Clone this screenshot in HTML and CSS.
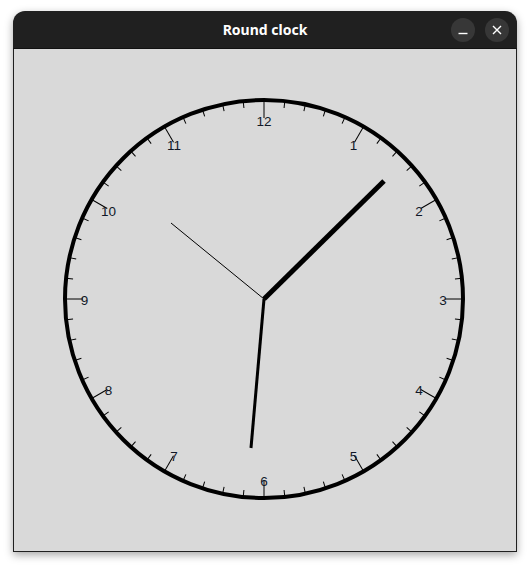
FILE: index.html
```html
<!DOCTYPE html>
<html>
<head>
<meta charset="utf-8">
<link rel="stylesheet" href="styles.css">
</head>
<body>
<div class="window">
  <div class="titlebar">
    <span class="title">Round clock</span>
    <div class="controls">
      <span class="btn"><svg width="24" height="24" viewBox="0 0 24 24"><line x1="7.5" y1="15.5" x2="16.5" y2="15.5" stroke="#fff" stroke-width="1.4"/></svg></span>
      <span class="btn"><svg width="24" height="24" viewBox="0 0 24 24"><path d="M8 8 L16 16 M16 8 L8 16" stroke="#fff" stroke-width="1.4"/></svg></span>
    </div>
  </div>
  <div class="content">
    <svg class="clock" width="502" height="502" viewBox="14 49 502 502">
      <defs>
        <line id="m" x1="264" y1="100" x2="264" y2="107" stroke="#000" stroke-width="1"/>
        <line id="h" x1="264" y1="100" x2="264" y2="118" stroke="#000" stroke-width="1"/>
      </defs>
      <circle cx="264" cy="299" r="199" fill="none" stroke="#000" stroke-width="4"/>
      <g>
        <use href="#h" transform="rotate(0 264 299)"/>
        <use href="#m" transform="rotate(6 264 299)"/>
        <use href="#m" transform="rotate(12 264 299)"/>
        <use href="#m" transform="rotate(18 264 299)"/>
        <use href="#m" transform="rotate(24 264 299)"/>
        <use href="#h" transform="rotate(30 264 299)"/>
        <use href="#m" transform="rotate(36 264 299)"/>
        <use href="#m" transform="rotate(42 264 299)"/>
        <use href="#m" transform="rotate(48 264 299)"/>
        <use href="#m" transform="rotate(54 264 299)"/>
        <use href="#h" transform="rotate(60 264 299)"/>
        <use href="#m" transform="rotate(66 264 299)"/>
        <use href="#m" transform="rotate(72 264 299)"/>
        <use href="#m" transform="rotate(78 264 299)"/>
        <use href="#m" transform="rotate(84 264 299)"/>
        <use href="#h" transform="rotate(90 264 299)"/>
        <use href="#m" transform="rotate(96 264 299)"/>
        <use href="#m" transform="rotate(102 264 299)"/>
        <use href="#m" transform="rotate(108 264 299)"/>
        <use href="#m" transform="rotate(114 264 299)"/>
        <use href="#h" transform="rotate(120 264 299)"/>
        <use href="#m" transform="rotate(126 264 299)"/>
        <use href="#m" transform="rotate(132 264 299)"/>
        <use href="#m" transform="rotate(138 264 299)"/>
        <use href="#m" transform="rotate(144 264 299)"/>
        <use href="#h" transform="rotate(150 264 299)"/>
        <use href="#m" transform="rotate(156 264 299)"/>
        <use href="#m" transform="rotate(162 264 299)"/>
        <use href="#m" transform="rotate(168 264 299)"/>
        <use href="#m" transform="rotate(174 264 299)"/>
        <use href="#h" transform="rotate(180 264 299)"/>
        <use href="#m" transform="rotate(186 264 299)"/>
        <use href="#m" transform="rotate(192 264 299)"/>
        <use href="#m" transform="rotate(198 264 299)"/>
        <use href="#m" transform="rotate(204 264 299)"/>
        <use href="#h" transform="rotate(210 264 299)"/>
        <use href="#m" transform="rotate(216 264 299)"/>
        <use href="#m" transform="rotate(222 264 299)"/>
        <use href="#m" transform="rotate(228 264 299)"/>
        <use href="#m" transform="rotate(234 264 299)"/>
        <use href="#h" transform="rotate(240 264 299)"/>
        <use href="#m" transform="rotate(246 264 299)"/>
        <use href="#m" transform="rotate(252 264 299)"/>
        <use href="#m" transform="rotate(258 264 299)"/>
        <use href="#m" transform="rotate(264 264 299)"/>
        <use href="#h" transform="rotate(270 264 299)"/>
        <use href="#m" transform="rotate(276 264 299)"/>
        <use href="#m" transform="rotate(282 264 299)"/>
        <use href="#m" transform="rotate(288 264 299)"/>
        <use href="#m" transform="rotate(294 264 299)"/>
        <use href="#h" transform="rotate(300 264 299)"/>
        <use href="#m" transform="rotate(306 264 299)"/>
        <use href="#m" transform="rotate(312 264 299)"/>
        <use href="#m" transform="rotate(318 264 299)"/>
        <use href="#m" transform="rotate(324 264 299)"/>
        <use href="#h" transform="rotate(330 264 299)"/>
        <use href="#m" transform="rotate(336 264 299)"/>
        <use href="#m" transform="rotate(342 264 299)"/>
        <use href="#m" transform="rotate(348 264 299)"/>
        <use href="#m" transform="rotate(354 264 299)"/>
      </g>
      <g class="nums" text-anchor="middle">
        <text x="264" y="126">12</text>
        <text x="353.5" y="150">1</text>
        <text x="419" y="215.5">2</text>
        <text x="443" y="305">3</text>
        <text x="419" y="395">4</text>
        <text x="353.5" y="461">5</text>
        <text x="264" y="485.5">6</text>
        <text x="174" y="461">7</text>
        <text x="108.5" y="395">8</text>
        <text x="84.5" y="305">9</text>
        <text x="108.5" y="215.5">10</text>
        <text x="174" y="150">11</text>
      </g>
      <line x1="264" y1="299" x2="171" y2="223" stroke="#000" stroke-width="1"/>
      <line x1="264" y1="299" x2="251" y2="448" stroke="#000" stroke-width="3"/>
      <line x1="264" y1="299" x2="384" y2="181" stroke="#000" stroke-width="5"/>
    </svg>
  </div>
</div>
</body>
</html>
```

FILE: styles.css
```css
html, body {
  margin: 0;
  padding: 0;
  background: #ffffff;
}
body {
  width: 530px;
  height: 568px;
  overflow: hidden;
}
.window {
  margin: 11px 0 0 13px;
  width: 504px;
  height: 541px;
  border-radius: 12px 12px 0 0;
  background: #202020;
  box-shadow: 0 3px 8px rgba(0,0,0,0.35);
  display: flex;
  flex-direction: column;
}
.titlebar {
  height: 37px;
  position: relative;
  display: flex;
  align-items: center;
  justify-content: center;
  border-bottom: 1px solid #111;
}
.title {
  color: #ffffff;
  font-family: "Noto Sans", "DejaVu Sans", sans-serif;
  font-weight: bold;
  font-size: 14px;
}
.controls {
  position: absolute;
  right: 8px;
  top: 7px;
  display: flex;
  gap: 10px;
}
.btn {
  width: 24px;
  height: 24px;
  border-radius: 50%;
  background: #373737;
  display: block;
}
.btn svg { display: block; }
.content {
  flex: 1;
  margin: 0 1px 1px 1px;
  background: #d9d9d9;
}
.clock { display: block; }
.nums text {
  font-family: "Liberation Sans", "DejaVu Sans", sans-serif;
  font-size: 13.5px;
  fill: #101828;
}
```
